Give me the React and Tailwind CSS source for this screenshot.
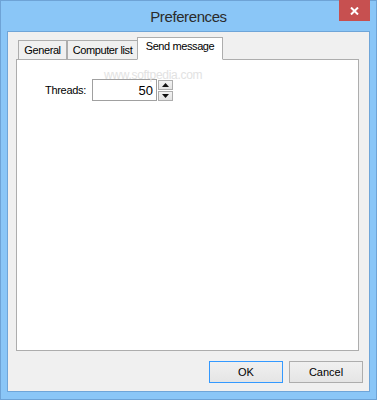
import { useState } from "react";

const ui = { fontFamily: '"Liberation Sans", Arial, sans-serif' };

function Tab({ label, active, onClick, className = "" }) {
    return active ? (
        <button
            onClick={onClick}
            className={`relative z-10 -mb-px h-[23px] px-0 pb-[4px] whitespace-nowrap text-center bg-white border border-[#adadad] border-b-white text-[11px] tracking-[-0.4px] text-black ${className}`}
        >
            {label}
        </button>
    ) : (
        <button
            onClick={onClick}
            className={`h-[19px] mt-[3px] px-0 pt-[1px] whitespace-nowrap text-center bg-[#f0f0f0] border border-b-0 border-[#adadad] text-[11px] tracking-[-0.4px] text-black ${className}`}
        >
            {label}
        </button>
    );
}

function Spinner() {
    return (
        <div className="flex flex-col gap-[1px] ml-[1px]">
            <button className="w-[15px] h-[10px] flex items-center justify-center border border-[#adadad] bg-gradient-to-b from-[#f3f3f3] to-[#e3e3e3]">
                <svg width="7" height="4" viewBox="0 0 7 4"><path d="M3.5 0 L7 4 L0 4 Z" fill="#111" /></svg>
            </button>
            <button className="w-[15px] h-[10px] flex items-center justify-center border border-[#adadad] bg-gradient-to-b from-[#f3f3f3] to-[#e3e3e3]">
                <svg width="7" height="4" viewBox="0 0 7 4"><path d="M0 0 L7 0 L3.5 4 Z" fill="#111" /></svg>
            </button>
        </div>
    );
}

export default function App() {
    const [tab, setTab] = useState("send");
    const [threads, setThreads] = useState("50");

    return (
        <div className="w-[377px] h-[400px] bg-[#8ac6f7] border border-[#6ea3d6] flex flex-col px-[6px] pb-[7px]" style={ui}>
            {/* Title bar */}
            <div className="relative h-[30px] flex items-center justify-center">
                <span className="text-[15px] tracking-[-0.4px] text-[#2b2b2b] mt-[2px]">Preferences</span>
                <button className="absolute top-[-1px] right-[0px] w-[31px] h-[21px] bg-[#c75050] flex items-center justify-center">
                    <svg width="9" height="8" viewBox="0 0 9 8">
                        <path d="M1 0.5 L8 7.5 M8 0.5 L1 7.5" stroke="#fff" strokeWidth="2" />
                    </svg>
                </button>
            </div>

            {/* Client */}
            <div className="flex-1 bg-[#f0f0f0] border border-[#6fa5d8] flex flex-col pl-[8px] pr-[6px] pt-[5px] pb-[8px]">
                <div className="flex items-start pl-[2px] pr-[4px]">
                    <Tab label="General" active={tab === "general"} onClick={() => setTab("general")} className="w-[49px]" />
                    <Tab label="Computer list" active={tab === "list"} onClick={() => setTab("list")} className="w-[71px]" />
                    <Tab label="Send message" active={tab === "send"} onClick={() => setTab("send")} className="w-[86px] -ml-px" />
                </div>
                <div className="relative h-[292px] mr-[4px] bg-white border border-[#adadad]">
                    <div className="absolute left-[87px] top-[6px] text-[12px] text-[#e2e2e2] tracking-[-0.3px] select-none">www.softpedia.com</div>
                    <div className="flex items-center pl-[28px] pt-[19px]">
                        <span className="text-[11px] tracking-[-0.3px] text-black w-[47px]">Threads:</span>
                        <input
                            value={threads}
                            onChange={(e) => setThreads(e.target.value)}
                            className="w-[65px] h-[22px] border border-[#a0a0a0] text-right pr-[3px] text-[13px] text-black outline-none"
                        />
                        <Spinner />
                    </div>
                </div>
                <div className="flex justify-end gap-[6px] mt-[10px] pr-0">
                    <button className="w-[74px] h-[22px] border border-[#3399ff] bg-gradient-to-b from-[#f0f0f0] to-[#e5e5e5] text-[11px] text-black">OK</button>
                    <button className="w-[74px] h-[22px] border border-[#adadad] bg-gradient-to-b from-[#f0f0f0] to-[#e5e5e5] text-[11px] text-black">Cancel</button>
                </div>
            </div>
        </div>
    );
}
